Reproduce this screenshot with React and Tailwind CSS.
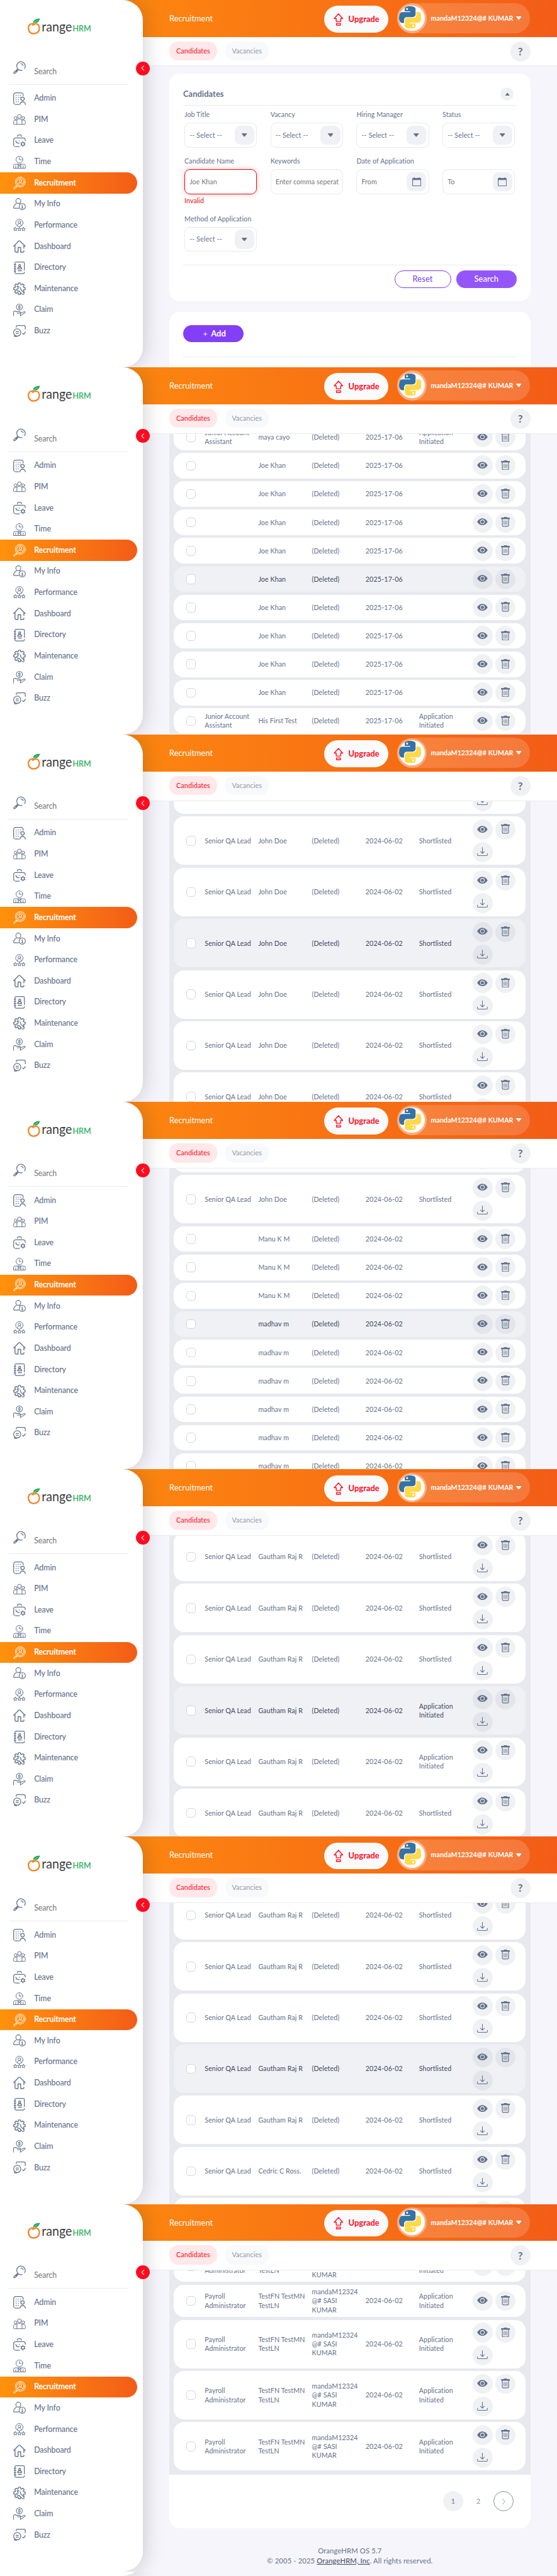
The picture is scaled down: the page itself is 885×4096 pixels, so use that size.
import React from "react";

/* The page uses a 0.708px spacing unit, set once on the root element. */

const TABLE_ICON = "#64728c";

function Svg({ children, className, box = "0 0 28 28", sw = 1.8 }) {
  return (
    <svg
      viewBox={box}
      className={"overflow-visible " + className}
      fill="none"
      stroke="currentColor"
      strokeWidth={sw}
      strokeLinecap="round"
      strokeLinejoin="round"
    >
      {children}
    </svg>
  );
}

const gearPath = (cx, cy, n, r1, r2) => {
  const pts = [];
  for (let i = 0; i < n; i++) {
    const a = (i * 2 * Math.PI) / n - Math.PI / 2;
    const w = Math.PI / n;
    [[r1, -0.78], [r2, -0.42], [r2, 0.42], [r1, 0.78]].forEach(([r, k]) =>
      pts.push(`${(cx + r * Math.cos(a + k * w)).toFixed(2)} ${(cy + r * Math.sin(a + k * w)).toFixed(2)}`)
    );
  }
  return "M" + pts.join("L") + "Z";
};

const starPath = (cx, cy, r) => {
  const pts = [];
  for (let i = 0; i < 10; i++) {
    const a = (i * Math.PI) / 5 - Math.PI / 2;
    const q = i % 2 ? r * 0.48 : r;
    pts.push(`${(cx + q * Math.cos(a)).toFixed(2)} ${(cy + q * Math.sin(a)).toFixed(2)}`);
  }
  return "M" + pts.join("L") + "Z";
};

const ICONS = {
  Search: (
    <>
      <path d="M25.6 15.1A9.6 9.6 0 1 0 20 19.2M17.5 4.800c2.500.3 4.300 1.700 5 3.900" />
      <path d="M10 16.500 1.600 23.900c-1 1-.8 2.600.9 2.700 1 .1 1.500-.2 2.200-.9l7.300-7.500M6 23l3-3.200" />
    </>
  ),
  Admin: (
    <>
      <path d="M22.3 7.3V5.5A4.5 4.5 0 0 0 17.8 1H5.5A4.5 4.5 0 0 0 1 5.5v17A4.5 4.5 0 0 0 5.5 27H12.5" />
      <circle cx="21" cy="14.2" r="3.9" />
      <path d="M15 27.3a6.100 6.100 0 0 1 12.200 0" />
      <path
        strokeWidth="2.2"
        d="M6.6 6.7h.01M11.3 6.7h.01M16 6.7h.01M6.6 11.3h.01M11.3 11.3h.01M6.6 16h.01M11.3 16h.01M6.6 20.7h.01M11.3 20.7h.01M15.5 11.3h.01"
      />
    </>
  ),
  PIM: (
    <g strokeWidth="1.4">
      <circle cx="14" cy="7.2" r="4.3" />
      <circle cx="5.4" cy="10.8" r="3.1" />
      <circle cx="22.6" cy="10.8" r="3.1" />
      <path d="M8.3 25v-8.3a3.6 3.6 0 0 1 3.6-3.6h4.2a3.6 3.6 0 0 1 3.6 3.6V25M8.3 15.6H4.2A3.5 3.5 0 0 0 .8 19v4.8c0 .7.5 1.2 1.2 1.2h24c.7 0 1.2-.5 1.2-1.2V19a3.5 3.5 0 0 0-3.4-3.4h-4.1" />
    </g>
  ),
  Leave: (
    <>
      <path d="M9.6 4.2V3.8A2.8 2.8 0 0 1 12.4 1h3.2a2.8 2.8 0 0 1 2.8 2.8v.4M27.1 13.5V12a4.5 4.5 0 0 0-4.5-4.500H5.500A4.500 4.500 0 0 0 1 12v10.500A4.500 4.500 0 0 0 5.500 27H14M6 14c.3 3.500 3.500 5.500 7.500 5.200" />
      <path strokeWidth="2.2" d="M13.5 14h.01" />
      <circle cx="21.8" cy="21.2" r="3.3" />
      <path d="M21.8 17.6v-1.8M21.8 26.8v-1.9M18.6 19.4l-1.5-.9M26.5 23.9l-1.5-.9M25 19.4l1.5-.9M18.6 23l-1.5.9" />
    </>
  ),
  Time: (
    <g strokeWidth="1.4">
      <circle cx="13.8" cy="8.2" r="7.5" />
      <path d="M13.8 3.8v4.7h4.2M.8 27v-5.2a3.3 3.3 0 0 1 3.3-3.3h19.8a3.3 3.3 0 0 1 3.3 3.3V27zM5.7 22v5M22.3 22v5M11 18.5V27M17 18.5V27M11 20l3 2 3-2M11 25l3-3 3 3" />
    </g>
  ),
  Recruitment: (
    <g strokeWidth="1.4">
      <circle cx="16" cy="11.8" r="11.2" />
      <circle cx="16" cy="11.8" r="8.2" />
      <circle cx="16" cy="9.4" r="2.9" />
      <path d="M10.6 17c.3-2 1.3-3 3-3h4.8c1.7 0 2.7 1 3 3M8 19.8 1.3 24.7c-1.3 1.2.2 3.3 1.8 2.3L9.8 20.8M6 21.5l1.8 1.7" />
    </g>
  ),
  "My Info": (
    <g strokeWidth="1.6">
      <circle cx="11.5" cy="6.5" r="5.6" />
      <path d="M7 12.2C3.6 14 1 17.8.9 21.5c0 .8.5 1.2 1.2 1.2h10.2M14 11.9l2.3 1" />
      <circle cx="20.3" cy="19" r="7" />
      <path d="M19.3 17.5h1.2v5M18.8 22.5h3.3M20.3 14.7h.01" />
    </g>
  ),
  Performance: (
    <g strokeWidth="1.4">
      <circle cx="13.8" cy="9" r="8.3" />
      <circle cx="13.8" cy="7.3" r="3" />
      <path d="M9.3 15.5c0-3 1.7-5 4.5-5s4.5 2 4.5 5" />
      <path d={starPath(4.7, 23.3, 4.3)} />
      <path d={starPath(13.8, 23.3, 4.3)} />
      <path d={starPath(22.9, 23.3, 4.3)} />
    </g>
  ),
  Dashboard: (
    <path
      strokeWidth="2"
      d="M1 13.5 12.3 1.9a2 2 0 0 1 2.9 0L27 13.5M4 12v12.5A2.3 2.3 0 0 0 6.3 26.8h4.5V16.3h6v10.5h5.4a1.8 1.8 0 0 0 1.8-1.8v-1.5M24 18v-6"
    />
  ),
  Directory: (
    <>
      <path d="M25 19V3.5A2.5 2.5 0 0 0 22.5 1h-16A2.5 2.5 0 0 0 4 3.5v21A2.5 2.5 0 0 0 6.5 27h16a2.5 2.5 0 0 0 2.5-2.5v-1M2 6.5h4M2 11.5h4M2 16.5h4M2 21.5h4" />
      <circle cx="14.5" cy="9" r="2.3" />
      <path d="M10 16.5c.3-3 1.8-4.5 4.5-4.5s4.2 1.5 4.5 4.5zM11.5 20.5h7" />
    </>
  ),
  Maintenance: (
    <>
      <path strokeWidth="2" d={gearPath(14, 14, 8, 9.8, 13)} />
      <path
        fill="#fff"
        d="M13 9.5c-1.5-1.2-3.3-1-4.5-.3l2.8 2.8-.8 2.5-2.7.5c-.3 1.5 0 2.5 1 3.500 1.400 1.300 3 1.500 4.500 1l7.200 7.200c2 1.800 5.300-.8 3.500-3.200L16.800 16c.5-2 0-3.500-1.300-4.500"
      />
    </>
  ),
  Claim: (
    <g strokeWidth="1.5">
      <circle cx="13.8" cy="7.5" r="6.8" />
      <path d="M15.9 5.5c-1-1.2-4-1-4 .5 0 2 4 1 4 3 0 1.6-3 1.8-4.2.4M13.8 3.3v1M13.8 10.5v1.3M.8 27V17.5c2.5-1.5 4.8-1.5 7 .3h6.7c2.2 0 2.2 3.5 0 3.500H9M16.500 21.300l8-3.300c2-.7 3.300 1 1.700 2.300L16 27z" />
    </g>
  ),
  Buzz: (
    <>
      <path d="M6.8 4.5V3.3A2.3 2.3 0 0 1 9.1 1h14.7a3.3 3.3 0 0 1 3.3 3.3V9" />
      <circle cx="9" cy="16.5" r="8.1" />
      <path d="M6.3 14.8h5.5M6.3 18.5h5.5M3 22v3.5h5M27 15c0 2-.8 3.3-2.8 4.2L23 20.5l-1.8-1.8" />
    </>
  ),
};

const NAV = [
  "Admin", "PIM", "Leave", "Time", "Recruitment", "My Info",
  "Performance", "Dashboard", "Directory", "Maintenance", "Claim", "Buzz",
];

function Logo() {
  return (
    <svg viewBox="0 0 144 42" className="mt-40 ml-61 h-42 w-144 shrink-0">
      <path
        d="M13 13.5C6 13 2.8 18.5 3 24.5c.3 7 5.5 11.700 12 11.700 7.500 0 12.700-5.200 12.700-12.300 0-6.500-4.300-10.300-8.800-9.900-2.500.2-3.800 1.700-6 2.700"
        fill="none"
        stroke="#f58220"
        strokeWidth="3.2"
        strokeLinecap="round"
      />
      <path d="M14 12.5C13 6 19 2.3 29 2c-1.5 4.5-4 9.5-9.5 10-2 .2-3.3-.2-4.5 1.3z" fill="#1fa552" />
      <path d="M15 11.5 24 5.5" stroke="#fff" strokeWidth=".8" />
      <text x="33" y="31" textLength="68" lengthAdjust="spacingAndGlyphs" fontFamily="Lato, sans-serif" fontSize="31" fill="#3d3d3d">
        range
      </text>
      <text x="102.5" y="31" textLength="41" lengthAdjust="spacingAndGlyphs" fontFamily="Lato, sans-serif" fontSize="20" fill="#1fae56" stroke="#1fae56" strokeWidth=".3">
        HRM
      </text>
    </svg>
  );
}

function Sidebar() {
  return (
    <aside className="relative z-10 flex h-825 w-320 flex-col rounded-r-[32px] bg-white shadow-[0_0_34px_rgba(20,20,30,0.22)] [grid-area:1/1]">
      <Logo />
      <div className="mt-57 ml-30 flex h-50 items-start text-[12.4px] text-[#777]">
        <Svg className="size-28 shrink-0 text-[#64728c]">{ICONS.Search}</Svg>
        <span className="ml-18.5 pt-10.5 leading-[15px] tracking-[-0.07px]">Search</span>
      </div>
      <div className="mr-32 ml-20 border-b border-[#ececee]" />
      <nav className="flex flex-col pt-7">
        {NAV.map((n) => {
          const on = n === "Recruitment";
          return (
            <div
              key={n}
              className={
                on
                  ? "flex h-47.5 w-308 items-center rounded-r-full bg-linear-to-r from-[#ff920b] to-[#f35c17] pl-30 text-[12.4px] font-bold tracking-[-0.14px] text-white"
                  : "flex h-47.5 w-308 items-center pl-30 text-[12.4px] font-medium tracking-[-0.09px] text-[#64728c]"
              }
            >
              <Svg className="size-28 shrink-0">{ICONS[n]}</Svg>
              <span className="ml-18.5">{n}</span>
            </div>
          );
        })}
      </nav>
      <div className="absolute top-138 -right-15.5 flex size-31 items-center justify-center rounded-full bg-[#ff0b1f] text-white">
        <Svg className="h-12 w-8" box="0 0 8 12" sw={1.5}>
          <path d="M6.5 1 1.5 6l5 5" />
        </Svg>
      </div>
    </aside>
  );
}

function Python() {
  return (
    <svg viewBox="0 0 24 24" className="mt-1 -ml-0.5 size-50">
      <path
        fill="#3672a4"
        d="M14.250.18l.9.2.73.26.59.3.45.32.34.34.25.34.16.33.1.3.04.26.02.2-.01.13V8.500l-.05.63-.13.55-.21.46-.26.38-.3.31-.33.25-.35.19-.35.14-.33.1-.3.07-.26.04-.21.02H8.770l-.69.05-.59.14-.5.22-.41.27-.33.32-.27.35-.2.36-.15.37-.1.35-.07.32-.04.27-.02.21v3.060H3.170l-.21-.03-.28-.07-.32-.12-.35-.18-.36-.26-.36-.36-.35-.46-.32-.59-.28-.73-.21-.88-.14-1.050-.05-1.230.06-1.220.16-1.040.24-.87.32-.71.36-.57.4-.44.42-.33.42-.24.4-.16.36-.1.32-.05.24-.01h.16l.06.01h8.160v-.83H6.180l-.01-2.750-.02-.37.05-.34.11-.31.17-.28.25-.26.31-.23.38-.2.44-.18.51-.15.58-.12.64-.1.71-.06.77-.04.84-.02 1.270.05zm-6.300 1.980l-.23.33-.08.41.08.41.23.34.33.22.41.09.41-.09.33-.22.23-.34.08-.41-.08-.41-.23-.33-.33-.22-.41-.09-.41.09z"
      />
      <path
        fill="#ffd94a"
        d="M21.100 6.110l.28.06.32.12.35.18.36.27.36.35.35.47.32.59.28.73.21.88.14 1.040.05 1.230-.06 1.230-.16 1.040-.24.86-.32.71-.36.57-.4.45-.42.33-.42.24-.4.16-.36.09-.32.05-.24.02-.16-.01h-8.220v.82h5.840l.01 2.760.02.36-.05.34-.11.31-.17.29-.25.25-.31.24-.38.2-.44.17-.51.15-.58.13-.64.09-.71.07-.77.04-.84.01-1.270-.04-1.070-.14-.9-.2-.73-.25-.59-.3-.45-.33-.34-.34-.25-.34-.16-.33-.1-.3-.04-.25-.02-.2.01-.13v-5.340l.05-.64.13-.54.21-.46.26-.38.3-.32.33-.24.35-.2.35-.14.33-.1.3-.06.26-.04.21-.02.13-.01h5.840l.69-.05.59-.14.5-.21.41-.28.33-.32.27-.35.2-.36.15-.36.1-.35.07-.32.04-.28.02-.21V6.070h2.090l.14.01zm-6.470 14.250l-.23.33-.08.41.08.41.23.33.33.23.41.08.41-.08.33-.23.23-.33.08-.41-.08-.41-.23-.33-.33-.23-.41-.08-.41.08z"
      />
    </svg>
  );
}

function Caret({ up, className }) {
  return (
    <svg viewBox="0 0 12 8" className={className} fill="currentColor">
      <path d={up ? "M6 .5 11.5 7.5H.5z" : "M.8 0h10.4c.7 0 1 .8.5 1.300L6.700 7.500c-.4.5-1 .5-1.400 0L.3 1.300C-.2.8.1 0 .8 0z"} />
    </svg>
  );
}

function TopBar() {
  return (
    <>
      <header className="flex h-83 shrink-0 items-start bg-linear-to-r from-[#ff920b] to-[#f35c17] pr-60 pl-380 text-white">
        <h6 className="w-347 text-[12.75px] leading-[59px] tracking-[0.04px]">Recruitment</h6>
        <div className="mt-13 flex h-60 w-145 items-center rounded-full bg-[#fafafa] pl-21 text-[#ff0b1f]">
          <Svg className="h-28 w-22" box="0 0 22 28" sw={1.9}>
            <path d="M11 1.5 20.5 12H16v6.5H6V12H1.5zM6.5 22.8h9v4h-9z" />
          </Svg>
          <span className="ml-12 text-[12.9px] font-bold tracking-[0.03px]">Upgrade</span>
        </div>
        <div className="mt-7 ml-19 flex h-68 w-299 items-center rounded-full bg-white/16">
          <div className="flex size-67 items-center justify-center rounded-full bg-white/35">
            <div className="size-57 overflow-hidden rounded-full bg-white">
              <Python />
            </div>
          </div>
          <span className="ml-9 w-187 text-[10.7px] font-bold tracking-[0.03px] whitespace-nowrap">mandaM12324@# KUMAR</span>
          <Caret className="ml-4 h-8 w-12" />
        </div>
      </header>
      <div className="flex h-66 shrink-0 items-start border-b border-[#eaebef] bg-white pt-10 pr-60 pl-380 text-[10.9px] tracking-[0.07px]">
        <span className="flex h-43 w-107 items-center justify-center rounded-[14px] bg-[#ffe8ea] text-[#ff0b1f]">Candidates</span>
        <span className="ml-18 flex h-43 w-98 items-center justify-center rounded-[14px] bg-[#f8f9fa] text-[#929baa]">Vacancies</span>
        <span className="ml-auto flex size-45 items-center justify-center rounded-full bg-[#eff1f3] text-[17px] font-bold text-[#64728c]">?</span>
      </div>
    </>
  );
}

function Screen({ children, tall }) {
  return (
    <section className={tall ? "grid h-835 grid-cols-[100%] overflow-hidden" : "grid h-825 grid-cols-[100%] overflow-hidden"}>
      <div className="flex min-h-0 flex-col overflow-hidden [grid-area:1/1]">
        <TopBar />
        <div className="min-h-0 flex-1 overflow-hidden pr-60 pl-380">{children}</div>
      </div>
      <Sidebar />
      {tall && (
        <div className="relative z-20 flex h-10 w-375 items-end self-end overflow-hidden bg-[#f6f5fb] [grid-area:1/1]">
          <div className="h-200 w-320 shrink-0 rounded-r-[32px] bg-white shadow-[0_0_34px_rgba(20,20,30,0.22)]" />
        </div>
      )}
    </section>
  );
}

function Box({ children, error }) {
  return (
    <div
      className={
        error
          ? "flex h-56 w-163 items-center justify-between rounded-[9px] border border-[#eb0910] pr-5 pl-10 text-[#777] shadow-[0_0_8px_rgba(235,9,16,0.25)]"
          : "flex h-56 w-163 items-center justify-between overflow-hidden rounded-[9px] border border-[#e8eaef] pr-5 pl-10 text-[#777]"
      }
    >
      {children}
    </div>
  );
}

function SelectBox() {
  return (
    <Box>
      <span className="tracking-[0.16px] text-[#64728c]">-- Select --</span>
      <span className="flex h-43 w-44 items-center justify-center rounded-[9px] bg-[#eff1f5] text-[#64728c]">
        <Caret className="h-8 w-12" />
      </span>
    </Box>
  );
}

function DateBox({ children }) {
  return (
    <Box>
      <span>{children}</span>
      <span className="flex h-43 w-44 items-center justify-center rounded-[9px] bg-[#eff1f5] text-[#64728c]">
        <svg viewBox="0 0 20 20" className="size-20" fill="currentColor" fillRule="evenodd">
          <path d="M3.5 0h2v1.5h9V0h2v1.5H18a2 2 0 0 1 2 2V18a2 2 0 0 1-2 2H2a2 2 0 0 1-2-2V3.5a2 2 0 0 1 2-2h1.5zM1.6 6v11.8c0 .4.2.6.6.6h15.600c.4 0 .6-.2.6-.6V6z" />
        </svg>
      </span>
    </Box>
  );
}

function FilterScreen() {
  return (
    <Screen>
      <div className="mt-16 h-512 rounded-[17px] bg-white px-31 pt-31 text-[10.7px] tracking-[0.06px] text-[#64728c]">
        <div className="flex h-30 items-center justify-between pr-6">
          <h5 className="text-[12.9px] font-bold">Candidates</h5>
          <span className="flex size-30 items-center justify-center rounded-full bg-[#eff1f3]">
            <Caret up className="h-8 w-12" />
          </span>
        </div>
        <div className="mt-10 border-b border-[#e8eaef]" />
        <div className="grid grid-cols-4 gap-x-30 px-3">
          {["Job Title", "Vacancy", "Hiring Manager", "Status"].map((l) => (
            <div key={l}>
              <div className="flex h-38 items-center pt-2">{l}</div>
              <SelectBox />
            </div>
          ))}
          <div>
            <div className="flex h-49 items-center pt-12">Candidate Name</div>
            <Box error>Joe Khan</Box>
            <div className="flex h-30 items-center text-[#eb0910]">Invalid</div>
          </div>
          <div>
            <div className="flex h-49 items-center pt-12">Keywords</div>
            <Box>
              <span className="w-142 overflow-hidden whitespace-nowrap">Enter comma seperat</span>
            </Box>
          </div>
          <div>
            <div className="flex h-49 items-center pt-12 whitespace-nowrap">Date of Application</div>
            <DateBox>From</DateBox>
          </div>
          <div>
            <div className="h-49" />
            <DateBox>To</DateBox>
          </div>
          <div>
            <div className="flex h-43 items-center pt-7 whitespace-nowrap">Method of Application</div>
            <SelectBox />
          </div>
        </div>
        <div className="mt-30 border-b border-[#e8eaef]" />
        <div className="mt-10 flex justify-end gap-12 text-[12.9px] tracking-[0.1px]">
          <span className="flex h-40 w-127 items-center justify-center rounded-full border border-[#7b3bf0] text-[#7b3bf0]">Reset</span>
          <span className="flex h-40 w-135 items-center justify-center rounded-full bg-[#9556f9] font-medium text-white">Search</span>
        </div>
      </div>
      <div className="mt-23 h-125 rounded-t-[17px] bg-white px-31 pt-31">
        <div className="flex h-38 w-136 items-center rounded-full bg-[#833ff7] pl-45 text-[13px] font-bold text-white">
          <Svg className="size-9" box="0 0 9 9" sw={1.3}>
            <path d="M4.5.5v8M.5 4.5h8" />
          </Svg>
          <span className="ml-8.5">Add</span>
        </div>
        <div className="mt-32 border-b border-[#e8eaef]" />
      </div>
    </Screen>
  );
}

function Eye({ ring }) {
  return (
    <svg viewBox="0 0 24 16" className="h-16 w-24">
      <path d="M12 .3c5 0 9 3.2 11.700 7.700C21 12.500 17 15.700 12 15.700S3 12.500.3 8C3 3.500 7 .3 12 .3z" fill={TABLE_ICON} />
      <circle cx="12" cy="8" r="4.3" fill="none" stroke={ring} strokeWidth="1.5" />
    </svg>
  );
}

function Trash() {
  return (
    <svg viewBox="0 0 20 22" className="h-22 w-20" fill="none" stroke={TABLE_ICON} strokeWidth="1.7">
      <path d="M6.5 0h7v1.500H19c.6 0 1 .5 1 1.200v1c0 .7-.4 1.100-1 1.100H1c-.6 0-1-.4-1-1.100v-1c0-.7.4-1.200 1-1.200h5.500z" fill={TABLE_ICON} stroke="none" />
      <path d="M3 4.5v14.200c0 1.500.9 2.400 2.300 2.400h9.400c1.400 0 2.300-.9 2.300-2.400V4.500" />
      <path d="M6.8 8v9.500M10 8v9.500M13.200 8v9.500" strokeWidth="1.3" />
    </svg>
  );
}

function Download() {
  return (
    <Svg className="h-20 w-24 text-[#64728c]" box="0 0 24 20" sw={1.5}>
      <path d="M12 .8v13M7.8 10l4.200 4.200 4.200-4.200M.9 14.500v2.700a2 2 0 0 0 2 2h18.200a2 2 0 0 0 2-2v-2.700" />
    </Svg>
  );
}

const ACTION = "flex size-45 items-center justify-center rounded-full bg-[#eff1f3] pb-2";
const ACTION_ON = "flex size-45 items-center justify-center rounded-full bg-[#e2e5ea] pb-2";
const CELL = "w-120.25 shrink-0 whitespace-pre";

function Row({ job = "", name, by = "(Deleted)", date, status = "", file, on, h }) {
  const height = h || (file ? "h-108.75" : "h-57.5");
  const action = on ? ACTION_ON : ACTION;
  return (
    <div
      className={
        (on ? "bg-[#f0f1f5] text-[#3d4862] " : "bg-white text-[#64728c] ") +
        "flex shrink-0 items-center rounded-[16px] pl-27.5 text-[10.7px] leading-[14.16px] tracking-[0.08px] " +
        height
      }
    >
      <span className="mr-20 size-22 shrink-0 rounded-[5px] border border-[#d3d6e1] bg-white" />
      <span className={CELL}>{job}</span>
      <span className={CELL}>{name}</span>
      <span className={CELL}>{by}</span>
      <span className={CELL + " tracking-[0.17px]"}>{date}</span>
      <span className={CELL}>{status}</span>
      <span className="flex w-120 shrink-0 flex-wrap gap-6">
        <span className={action}><Eye ring={on ? "#e2e5ea" : "#eff1f3"} /></span>
        <span className={action}><Trash /></span>
        {file && <span className={action}><Download /></span>}
      </span>
    </div>
  );
}

function TableScreen({ rows, shift }) {
  return (
    <Screen>
      <div className={"flex flex-col gap-6.25 bg-[#e8e9ef] px-10 " + shift}>
        {rows.map((r, i) => (
          <Row key={i} {...r} />
        ))}
      </div>
    </Screen>
  );
}

const times = (n, row, onIndex = -1) =>
  Array.from({ length: n }, (_, i) => ({ ...row, on: i === onIndex }));

const JOE = { name: "Joe Khan", date: "2025-17-06" };
const JUNIOR = { job: "Junior Account\nAssistant", date: "2025-17-06", status: "Application\nInitiated" };
const QA = { job: "Senior QA Lead", date: "2024-06-02", status: "Shortlisted", file: true };
const JOHN = { ...QA, name: "John Doe" };
const GAUTHAM = { ...QA, name: "Gautham Raj R" };
const MANU = { name: "Manu K M", date: "2024-06-02" };
const MADHAV = { name: "madhav m", date: "2024-06-02" };
const PAYROLL = {
  job: "Payroll\nAdministrator",
  name: "TestFN TestMN\nTestLN",
  by: "mandaM12324\n@# SASI\nKUMAR",
  date: "2024-06-02",
  status: "Application\nInitiated",
};

const PAGE_2 = [{ ...JUNIOR, name: "maya cayo" }, ...times(9, JOE, 4), { ...JUNIOR, name: "His First Test" }];
const PAGE_3 = times(7, JOHN, 3);
const PAGE_4 = [...times(2, JOHN), ...times(3, MANU), ...times(6, MADHAV, 0)];
const PAGE_5 = [
  ...times(3, GAUTHAM),
  ...times(2, { ...GAUTHAM, status: "Application\nInitiated" }, 0),
  GAUTHAM,
];
const PAGE_6 = [...times(5, GAUTHAM, 3), { ...QA, name: "Cedric C Ross." }, { file: true, by: "" }];

function LastScreen() {
  return (
    <Screen tall>
      <div className="-mt-46.5 flex flex-col gap-6.25 bg-[#e8e9ef] px-10 pb-9.5">
        <Row {...PAYROLL} h="h-72.5" />
        <Row {...PAYROLL} h="h-72.5" />
        <Row {...PAYROLL} file />
        <Row {...PAYROLL} file />
        <Row {...PAYROLL} file />
      </div>
      <div className="flex h-119.5 items-center justify-end rounded-b-[17px] bg-white pr-37 text-[10.7px] text-[#8a93a5]">
        <span className="flex size-45 items-center justify-center rounded-full bg-[#eff1f5] font-bold">1</span>
        <span className="ml-12 flex size-45 items-center justify-center font-medium">2</span>
        <span className="ml-12 flex size-45 items-center justify-center rounded-full border border-[#8a93a5]">
          <Svg className="h-13 w-7" box="0 0 7 13" sw={1.3}>
            <path d="M.8.8 6 6.5.8 12.2" />
          </Svg>
        </span>
      </div>
      <div className="pt-40 text-center text-[11.3px] leading-[15.5px] tracking-[0.11px] text-[#64728c]">
        <p>OrangeHRM OS 5.7</p>
        <p>
          © 2005 - 2025 <a className="text-[#3d4862] underline">OrangeHRM, Inc</a>. All rights reserved.
        </p>
      </div>
    </Screen>
  );
}

export default function App() {
  return (
    <div className="w-1250 overflow-hidden bg-[#f6f5fb] font-[Lato,'Noto_Sans',sans-serif] [--spacing:0.708px]">
      <FilterScreen />
      <TableScreen rows={PAGE_2} shift="-mt-20.75" />
      <TableScreen rows={PAGE_3} shift="-mt-80" />
      <TableScreen rows={PAGE_4} shift="-mt-100" />
      <TableScreen rows={PAGE_5} shift="-mt-6.75" />
      <TableScreen rows={PAGE_6} shift="-mt-27" />
      <LastScreen />
    </div>
  );
}
